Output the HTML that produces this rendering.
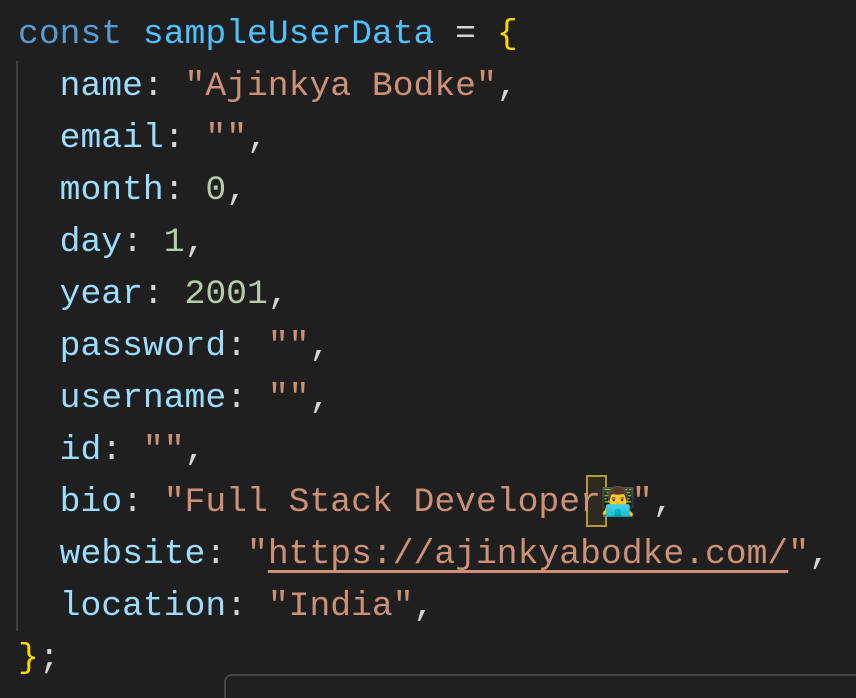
<!DOCTYPE html>
<html><head><style>
html,body{margin:0;padding:0;width:856px;height:698px;overflow:hidden;}
body{background:#1f1f1f;position:relative;font-family:"Liberation Mono",monospace;font-size:34.7px;}
pre{margin:0;position:absolute;left:18px;top:9px;line-height:52px;font-family:inherit;color:#d4d4d4;white-space:pre;}
.k{color:#569cd6}.v{color:#4fc1ff}.p{color:#9cdcfe}.s{color:#ce9178}.n{color:#b5cea8}.b{color:#ffd700}
.u{text-decoration:underline;text-decoration-thickness:3px;text-underline-offset:7px}
.guide{position:absolute;left:16px;top:61px;width:2px;height:570px;background:#404040}
.cur{position:absolute;left:586px;top:475px;width:17px;height:48px;border:2px solid #b8972e;background:#2d2a20}
.emo{font-family:"Noto Color Emoji",sans-serif;font-size:28px;line-height:0;display:inline-block;width:31px;overflow:visible}
.box{position:absolute;left:224px;top:674px;width:700px;height:40px;border:2px solid #444;border-radius:8px;background:#202020}
</style></head><body>
<div class="guide"></div>
<div class="cur"></div>
<pre><span class="k">const</span> <span class="v">sampleUserData</span> = <span class="b">{</span>
  <span class="p">name</span>: <span class="s">"Ajinkya Bodke"</span>,
  <span class="p">email</span>: <span class="s">""</span>,
  <span class="p">month</span>: <span class="n">0</span>,
  <span class="p">day</span>: <span class="n">1</span>,
  <span class="p">year</span>: <span class="n">2001</span>,
  <span class="p">password</span>: <span class="s">""</span>,
  <span class="p">username</span>: <span class="s">""</span>,
  <span class="p">id</span>: <span class="s">""</span>,
  <span class="p">bio</span>: <span class="s">"Full Stack Developer<span class="emo">👨‍💻</span>"</span>,
  <span class="p">website</span>: <span class="s">"<span class="u">https://ajinkyabodke.com/</span>"</span>,
  <span class="p">location</span>: <span class="s">"India"</span>,
<span class="b">}</span>;</pre>
<div class="box"></div>
</body></html>
